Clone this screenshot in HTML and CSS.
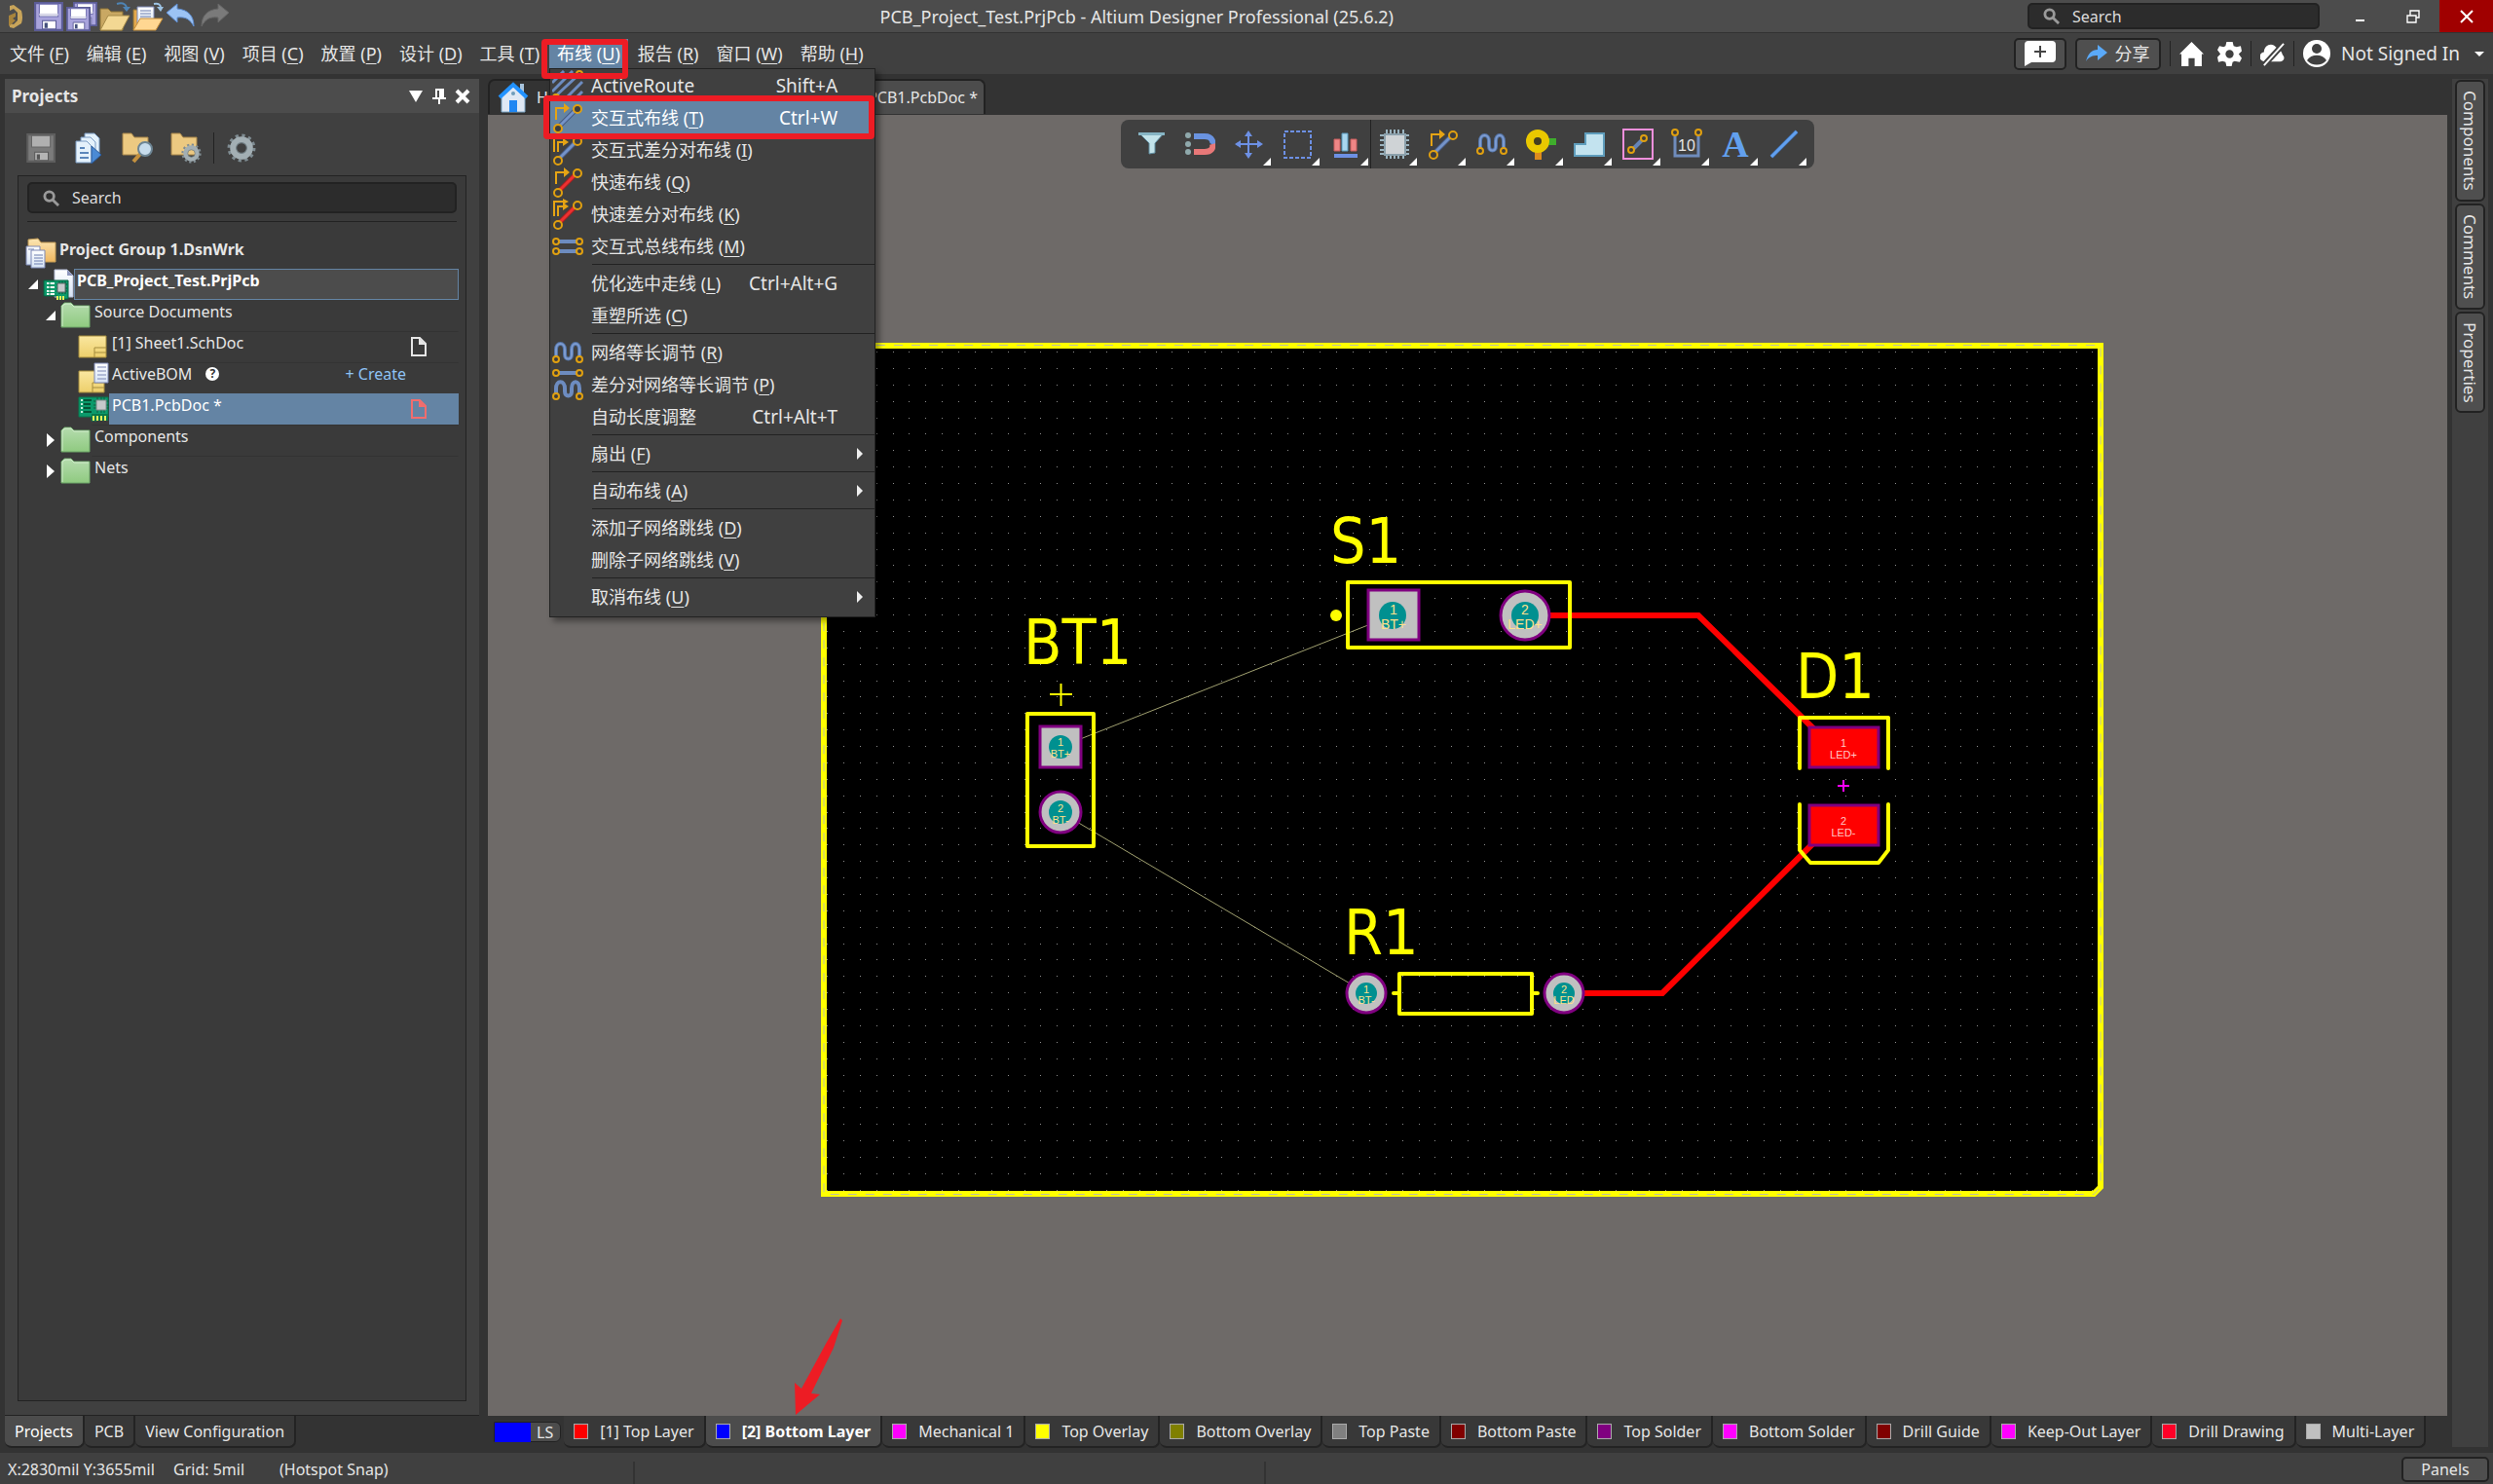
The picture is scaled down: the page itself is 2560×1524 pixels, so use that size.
FILE: index.html
```html
<!DOCTYPE html>
<html lang="zh-CN">
<head>
<meta charset="utf-8">
<title>PCB_Project_Test.PrjPcb - Altium Designer Professional (25.6.2)</title>
<link rel="stylesheet" href="styles.css">
</head>
<body>
<svg class="defs" aria-hidden="true">
  <defs>
    <linearGradient id="paper" x2="0" y2="1"><stop offset="0" stop-color="#fff"/><stop offset="1" stop-color="#d5e2f4"/></linearGradient>
    <linearGradient id="gold" x2="0" y2="1"><stop offset="0" stop-color="#fbe6b4"/><stop offset="1" stop-color="#efb75f"/></linearGradient>
    <linearGradient id="leaf" x2="0" y2="1"><stop offset="0" stop-color="#b5dcae"/><stop offset="1" stop-color="#8fca80"/></linearGradient>
    <linearGradient id="sheet" x2="0" y2="1"><stop offset="0" stop-color="#fae7a0"/><stop offset="1" stop-color="#edcf6b"/></linearGradient>
  </defs>
  <symbol id="i-magnifier" viewBox="0 0 18 18"><circle cx="7" cy="7" r="5" fill="none" stroke="#9a9a9a" stroke-width="3"/><path d="M11 11l6 6" stroke="#9a9a9a" stroke-width="3"/></symbol>
  <symbol id="i-floppy" viewBox="0 0 28 28"><path d="M1 1h26v26H1z" fill="#a9a4dc" stroke="#5b5c96" stroke-width="2"/><path d="M5 2h18v12H5z" fill="#fff" stroke="#6d6cae"/><path d="M5 11h18v2H5z" fill="#d8d8e8"/><path d="M8 18h13v8H8z" fill="#fff" stroke="#5b5c96"/><path d="M10 20h3v5h-3z" fill="#44507c"/></symbol>
  <symbol id="i-floppy-off" viewBox="0 0 28 28"><path d="M1 1h26v26H1z" fill="#7b7b7b" stroke="#5e5e5e" stroke-width="2"/><path d="M5 2h18v11H5z" fill="#b0b0b0" stroke="#666"/><path d="M8 18h13v8H8z" fill="#b5b5b5" stroke="#5a5a5a"/><path d="M10 20h3v5h-3z" fill="#555"/></symbol>
  <symbol id="i-folder-green" viewBox="0 0 32 28"><path d="M1 26V4l3-3h7l3 3h16v22z" fill="url(#leaf)" stroke="#6da768"/><path d="M2 25V4l3-2h6l3 3h15" fill="none" stroke="#d3ecce"/></symbol>
  <symbol id="i-sheet" viewBox="0 0 32 24"><path d="M1 1h28v22H1z" fill="url(#sheet)" stroke="#a58c3d"/><path d="M17 23V13h12M17 18h12" fill="none" stroke="#a58c3d"/></symbol>
  <symbol id="i-bom" viewBox="0 0 32 32"><path d="M1 9h26v22H1z" fill="url(#sheet)" stroke="#a58c3d"/><path d="M15 31V21h12M15 26h12" fill="none" stroke="#a58c3d"/><path d="M17 1h14v20H17z" fill="url(#paper)" stroke="#7d88b5"/><path d="M20 5h9M20 9h9M20 13h9M20 17h9" stroke="#7d88b5"/></symbol>
  <symbol id="i-board" viewBox="0 0 32 26"><path d="M1 1h30v20H20v4h-6v-4H1z" fill="#0b9a6b" stroke="#077a50"/><path d="M14 18h17v7H14z" fill="#08784a"/><path d="M16 20v5M20 20v5M24 20v5M28 20v5" stroke="#e3f25c" stroke-width="2"/><path d="M6 4h8M6 8h7M6 12h7M6 16h8" stroke="#055436" stroke-width="2"/><path d="M3 4h2M3 8h2M3 12h2M3 16h2" stroke="#c8f0dc" stroke-width="2"/><path d="M16 5h16M16 9h16M16 12h16M20 1v16M24 1v16M27 1v16" stroke="#0f5d41"/><path d="M19 4h10v10H19z" fill="#c5c9cb" stroke="#7f8a8a"/></symbol>
  <symbol id="i-project" viewBox="0 0 32 32"><path d="M12 1h13l6 6v22H12z" fill="url(#paper)" stroke="#b7bfd8"/><path d="M25 1v6h6z" fill="#8e97bd"/><path d="M1 12h25v19H15v-3H1z" fill="#0b9a6b" stroke="#06603f"/><path d="M4 15h8M4 19h8M4 23h8M4 26h8" stroke="#f0fff4" stroke-width="2"/><path d="M7 14v13" stroke="#0b7a53"/><path d="M14 16h11M14 20h11M14 23h11M17 13v13M20 13v13M23 13v13" stroke="#0d4f38"/><path d="M15 15h8v9h-8z" fill="#c5c9cb" stroke="#5b6b66"/><path d="M15 28v4M18 28v4M21 28v4" stroke="#e3f25c" stroke-width="2"/></symbol>
  <symbol id="i-group" viewBox="0 0 32 32"><path d="M3 20V2l10-1 3 4h15v20H3z" fill="url(#gold)" stroke="#c29b54"/><path d="M1 9h14v19H1z" fill="url(#paper)" stroke="#7d88b5"/><path d="M6 13h14v18H6z" fill="url(#paper)" stroke="#7d88b5"/><path d="M9 18h9M9 21h9M9 24h9M9 27h9M3 12h6" stroke="#6d7fb0"/></symbol>
  <symbol id="i-page" viewBox="0 0 16 20"><path d="M1 1h8l6 6v12H1z" fill="none" stroke="currentColor" stroke-width="2"/><path d="M8 1v7h7z" fill="currentColor"/></symbol>
  <symbol id="i-route" viewBox="0 0 32 32"><path d="M6 26L26 6" stroke="#46597f" stroke-width="5"/><path d="M6 26L26 6" stroke="#7493c8" stroke-width="3"/><path d="M4 18V6h9" fill="none" stroke="#e6a414" stroke-width="2"/><path d="M12 1l6 5-6 5z" fill="#e6a414"/><g fill="#3d3d3d" stroke="#e0a010" stroke-width="2"><circle cx="26" cy="7" r="4"/><circle cx="6" cy="27" r="4"/></g></symbol>
  <symbol id="i-route-diff" viewBox="0 0 32 32"><path d="M6 26L26 6" stroke="#46597f" stroke-width="5"/><path d="M6 26L26 6" stroke="#7493c8" stroke-width="3"/><path d="M2 18V3h9M6 18V8h6" fill="none" stroke="#e6a414" stroke-width="2"/><path d="M11 0l6 3-6 3zM11 4l6 4-6 4z" fill="#e6a414"/><g fill="#3d3d3d" stroke="#e0a010" stroke-width="2"><circle cx="26" cy="7" r="4"/><circle cx="6" cy="27" r="4"/></g></symbol>
  <symbol id="i-quick" viewBox="0 0 32 32"><path d="M6 26L26 6" stroke="#a02020" stroke-width="5"/><path d="M6 26L26 6" stroke="#ee3030" stroke-width="3"/><path d="M4 18V6h9" fill="none" stroke="#e6a414" stroke-width="2"/><path d="M12 1l6 5-6 5z" fill="#e6a414"/><g fill="#3d3d3d" stroke="#e0a010" stroke-width="2"><circle cx="26" cy="7" r="4"/><circle cx="6" cy="27" r="4"/></g></symbol>
  <symbol id="i-quick-diff" viewBox="0 0 32 32"><path d="M6 26L26 6" stroke="#a02020" stroke-width="5"/><path d="M6 26L26 6" stroke="#ee3030" stroke-width="3"/><path d="M2 18V3h9M6 18V8h6" fill="none" stroke="#e6a414" stroke-width="2"/><path d="M11 0l6 3-6 3zM11 4l6 4-6 4z" fill="#e6a414"/><g fill="#3d3d3d" stroke="#e0a010" stroke-width="2"><circle cx="26" cy="7" r="4"/><circle cx="6" cy="27" r="4"/></g></symbol>
  <symbol id="i-active" viewBox="0 0 32 32"><path d="M0 13L12 1M0 22L21 1M1 29L28 4M14 29L31 12M24 29l7-7" stroke="#6d8cc0" stroke-width="3"/><g fill="#3d3d3d" stroke="#e0a010" stroke-width="2"><circle cx="28" cy="4" r="3"/><circle cx="4" cy="28" r="3"/></g></symbol>
  <symbol id="i-bus" viewBox="0 0 32 32"><path d="M4 11h24M4 21h24" stroke="#6d8cc0" stroke-width="4"/><g fill="#3d3d3d" stroke="#e0a010" stroke-width="2"><circle cx="4" cy="11" r="3"/><circle cx="28" cy="11" r="3"/><circle cx="4" cy="21" r="3"/><circle cx="28" cy="21" r="3"/></g></symbol>
  <symbol id="i-tune" viewBox="0 0 32 32"><path d="M4 22V13c0-8 9-8 9 0v5c0 6 7 6 7 0v-5c0-8 8-8 8 0v9" fill="none" stroke="#5475a8" stroke-width="4"/><path d="M4 22V13c0-8 9-8 9 0v5c0 6 7 6 7 0v-5c0-8 8-8 8 0v9" fill="none" stroke="#7d9bd0" stroke-width="2"/><g fill="#3d3d3d" stroke="#e0a010" stroke-width="2"><circle cx="4" cy="23" r="3"/><circle cx="28" cy="23" r="3"/></g></symbol>
  <symbol id="i-tune-diff" viewBox="0 0 32 32"><path d="M4 4h24" stroke="#6d8cc0" stroke-width="4"/><path d="M4 27V20c0-9 9-9 9 0v3c0 6 7 6 7 0v-3c0-9 8-9 8 0v7" fill="none" stroke="#6d8cc0" stroke-width="4"/><g fill="#3d3d3d" stroke="#e0a010" stroke-width="2"><circle cx="4" cy="4" r="3"/><circle cx="28" cy="4" r="3"/><circle cx="4" cy="28" r="3"/><circle cx="28" cy="28" r="3"/></g></symbol>
  <symbol id="i-gear" viewBox="0 0 28 28"><circle cx="14" cy="14" r="12" fill="none" stroke="#7f8c92" stroke-width="3" stroke-dasharray="3 3.28"/><circle cx="14" cy="14" r="8" fill="none" stroke="#a3afb4" stroke-width="6"/><circle cx="14" cy="14" r="5" fill="none" stroke="#6f7c82"/></symbol>
</svg>

<div class="app">
  <header class="titlebar">
    <div class="quick">
      <svg class="logo" viewBox="0 0 16 26"><path d="M2 2l4-1 8 6q2 7 0 13l-8 5-4-1v-4l4 1 4-4V9L6 5 2 7z" fill="#c9a55a"/><path d="M1 12l7-3v4l-3 2 3 2-7 6z" fill="#a8843c"/></svg>
      <button aria-label="Save"><svg viewBox="0 0 28 28"><use href="#i-floppy"/></svg></button>
      <button aria-label="Save all"><svg viewBox="0 0 32 30"><use href="#i-floppy" x="7" y="0" width="25" height="25"/><use href="#i-floppy" x="0" y="5" width="25" height="25"/></svg></button>
      <button aria-label="Open"><svg viewBox="0 0 32 30"><path d="M1 29V7h8l3 3h12v19z" fill="#c9a863" stroke="#8f7536"/><path d="M1 29l8-15h22l-8 15z" fill="#f3d893" stroke="#a58a48"/><path d="M18 2c7-2 10 1 10 5" fill="none" stroke="#4e84b4" stroke-width="2"/><path d="M24 5h8l-4 5z" fill="#4e84b4"/></svg></button>
      <button aria-label="Open project"><svg viewBox="0 0 32 30"><path d="M1 29V8h6v18z" fill="#e5a94c" stroke="#8f7536"/><path d="M5 5h17v20H5z" fill="url(#paper)" stroke="#7d88b5"/><path d="M8 9h11M8 12h11M8 15h11" stroke="#6d7fb0"/><path d="M1 29l7-12h23l-7 12z" fill="#ffd792" stroke="#c48c38"/><path d="M22 2c5-1 7 1 7 4" fill="none" stroke="#9cc3e4" stroke-width="2"/><path d="M25 5h7l-3 5z" fill="#9cc3e4"/></svg></button>
      <button aria-label="Undo"><svg viewBox="0 0 32 30"><path d="M1 11L12 2v5c12 1 17 8 17 18-4-7-8-10-17-9v5z" fill="#9cc3f4" stroke="#5d8cd0"/></svg></button>
      <button aria-label="Redo"><svg viewBox="0 0 32 30"><path d="M31 11L20 2v5C8 8 3 15 3 25c4-7 8-10 17-9v5z" fill="#7a7a7a" stroke="#666"/></svg></button>
    </div>
    <h1>PCB_Project_Test.PrjPcb - Altium Designer Professional (25.6.2)</h1>
    <label class="field title-search"><svg><use href="#i-magnifier"/></svg><input type="text" placeholder="Search" aria-label="Search"></label>
    <div class="window-buttons">
      <button aria-label="Minimize"><svg viewBox="0 0 14 14"><path d="M3 11h9" stroke="#fff" stroke-width="2"/></svg></button>
      <button aria-label="Restore"><svg viewBox="0 0 14 14"><path d="M1 6h9v7H1zM4 6V1h9v7h-3" fill="none" stroke="#fff" stroke-width="1.4"/></svg></button>
      <button class="close" aria-label="Close"><svg viewBox="0 0 14 14"><path d="M1 1l12 12M13 1L1 13" stroke="#fff" stroke-width="2"/></svg></button>
    </div>
  </header>

  <nav class="menubar">
    <ul class="menus">
      <li><button>文件 (<u>F</u>)</button></li>
      <li><button>编辑 (<u>E</u>)</button></li>
      <li><button>视图 (<u>V</u>)</button></li>
      <li><button>项目 (<u>C</u>)</button></li>
      <li><button>放置 (<u>P</u>)</button></li>
      <li><button>设计 (<u>D</u>)</button></li>
      <li><button>工具 (<u>T</u>)</button></li>
      <li class="open"><button>布线 (<u>U</u>)</button>
        <ul class="popup">
          <li><button><svg><use href="#i-active"/></svg><span class="latin">ActiveRoute</span><kbd>Shift+A</kbd></button></li>
          <li><button class="current"><svg><use href="#i-route"/></svg><span>交互式布线 (<u>T</u>)</span><kbd>Ctrl+W</kbd></button></li>
          <li><button><svg><use href="#i-route-diff"/></svg><span>交互式差分对布线 (<u>I</u>)</span></button></li>
          <li><button><svg><use href="#i-quick"/></svg><span>快速布线 (<u>Q</u>)</span></button></li>
          <li><button><svg><use href="#i-quick-diff"/></svg><span>快速差分对布线 (<u>K</u>)</span></button></li>
          <li><button><svg><use href="#i-bus"/></svg><span>交互式总线布线 (<u>M</u>)</span></button></li>
          <li class="group"><button><svg></svg><span>优化选中走线 (<u>L</u>)</span><kbd>Ctrl+Alt+G</kbd></button></li>
          <li><button><svg></svg><span>重塑所选 (<u>C</u>)</span></button></li>
          <li class="group"><button><svg><use href="#i-tune"/></svg><span>网络等长调节 (<u>R</u>)</span></button></li>
          <li><button><svg><use href="#i-tune-diff"/></svg><span>差分对网络等长调节 (<u>P</u>)</span></button></li>
          <li><button><svg></svg><span>自动长度调整</span><kbd>Ctrl+Alt+T</kbd></button></li>
          <li class="group"><button class="sub"><svg></svg><span>扇出 (<u>F</u>)</span></button></li>
          <li class="group"><button class="sub"><svg></svg><span>自动布线 (<u>A</u>)</span></button></li>
          <li class="group"><button><svg></svg><span>添加子网络跳线 (<u>D</u>)</span></button></li>
          <li><button><svg></svg><span>删除子网络跳线 (<u>V</u>)</span></button></li>
          <li class="group"><button class="sub"><svg></svg><span>取消布线 (<u>U</u>)</span></button></li>
        </ul>
        <span class="mark mark-menu"></span>
        <span class="mark mark-item"></span>
      </li>
      <li><button>报告 (<u>R</u>)</button></li>
      <li><button>窗口 (<u>W</u>)</button></li>
      <li><button>帮助 (<u>H</u>)</button></li>
    </ul>
    <div class="account">
      <button class="raised comment" aria-label="Add comment"><svg viewBox="0 0 32 26"><path d="M4 0h24q4 0 4 4v14q0 4-4 4H7l-7 4V4q0-4 4-4z" fill="#fff"/><path d="M16 5v12M10 11h12" stroke="#444" stroke-width="2"/></svg></button>
      <button class="raised share"><svg viewBox="0 0 22 18"><path d="M0 17C2 9 6 5 12 5V0l10 8-10 8v-5c-5 0-9 1-12 6z" fill="#5aa9f8"/></svg>分享</button>
      <span class="bar"></span>
      <button aria-label="Home"><svg viewBox="0 0 24 24"><path d="M12 0L0 12h2v12h7v-8h6v8h7V12h2z" fill="#fff"/></svg></button>
      <button class="settings" aria-label="Settings"><svg viewBox="0 0 24 24"><path d="M9 0h6l1 4 3 1 4-1 1 5-3 3 3 4-2 4-5-1-2 1-1 4H9l-1-4-3-1-4 1-1-5 3-3-3-4 2-4 4 1 2-1z" fill="#fff"/><circle cx="12" cy="12" r="4" fill="#404040"/></svg></button>
      <span class="bar"></span>
      <button aria-label="Offline"><svg viewBox="0 0 26 24"><path d="M5 20a5 5 0 0 1-1-10c0-8 9-11 13-5 4-1 7 8 7 8 3 3 1 7-3 7z" fill="#fff"/><path d="M3 25L25 1" stroke="#404040" stroke-width="6"/><path d="M4 24L25 1" stroke="#fff" stroke-width="2"/></svg></button>
      <span class="bar"></span>
      <button class="user"><svg viewBox="0 0 28 28"><circle cx="14" cy="14" r="14" fill="#fff"/><circle cx="14" cy="9" r="5" fill="#404040"/><path d="M4 21c4-7 16-7 20 0-5 6-15 6-20 0z" fill="#404040"/></svg>Not Signed In<i class="caret"></i></button>
    </div>
  </nav>

  <div class="workspace">
    <aside class="left">
      <section class="panel">
        <header><h2>Projects</h2>
          <button aria-label="Panel menu"><svg viewBox="0 0 16 16"><path d="M1 2h14L8 14z" fill="#fff"/></svg></button>
          <button aria-label="Pin"><svg viewBox="0 0 16 16"><path d="M4 0h9v9h2v2H9v5H7v-5H1V9h3zM6 2v7h2V2z" fill="#fff" fill-rule="evenodd"/></svg></button>
          <button aria-label="Close panel"><svg viewBox="0 0 16 16"><path d="M2 2l12 12M14 2L2 14" stroke="#fff" stroke-width="4"/></svg></button>
        </header>
        <div class="panel-tools">
          <button aria-label="Save"><svg viewBox="-2 -1 30 30"><use href="#i-floppy-off" width="28" height="28"/></svg></button>
          <button aria-label="Compile"><svg viewBox="0 0 32 32"><g fill="#e4f1fb" stroke="#7b9cc4"><path d="M12 1h10l5 5v16H12z"/><path d="M8 5h10l5 5v16H8z"/><path d="M3 9h11l5 5v17H3z"/></g><path d="M7 16h5M7 21h9M7 26h9" stroke="#5b87bb" stroke-width="2"/><path d="M19 14l10 9-10 9z" fill="#4b8ad4" stroke="#28599a"/></svg></button>
          <button aria-label="Explore"><svg viewBox="0 0 32 32"><path d="M1 23V1h9l3 4h14v18z" fill="#ecc981" stroke="#a8864a"/><path d="M19 22l-7 8" stroke="#c4913f" stroke-width="4"/><circle cx="24" cy="17" r="7" fill="#c7dcec" stroke="#6d8594" stroke-width="2"/></svg></button>
          <button aria-label="Project options"><svg viewBox="0 0 32 32"><path d="M1 23V1h9l3 4h14v18z" fill="#ecc981" stroke="#a8864a"/><use href="#i-gear" x="11" y="11" width="21" height="21"/></svg></button>
          <span class="bar"></span>
          <button aria-label="Preferences"><svg viewBox="0 0 32 32"><use href="#i-gear" x="1" y="1" width="30" height="30"/></svg></button>
        </div>
        <div class="tree-box">
          <label class="field"><svg><use href="#i-magnifier"/></svg><input type="text" placeholder="Search" aria-label="Search projects"></label>
          <hr>
          <ul class="tree">
            <li class="l0"><svg><use href="#i-group"/></svg><span><b>Project Group 1.DsnWrk</b></span></li>
            <li class="l1 focus"><i class="down"></i><svg><use href="#i-project"/></svg><span><b>PCB_Project_Test.PrjPcb</b></span></li>
            <li class="l2"><i class="down"></i><svg><use href="#i-folder-green"/></svg><span>Source Documents</span></li>
            <li class="l3"><svg><use href="#i-sheet"/></svg><span class="lined">[1] Sheet1.SchDoc<svg class="state"><use href="#i-page"/></svg></span></li>
            <li class="l3"><svg><use href="#i-bom"/></svg><span class="lined">ActiveBOM<em>?</em><a href="#create">+ Create</a></span></li>
            <li class="l3 picked"><svg><use href="#i-board"/></svg><span>PCB1.PcbDoc *<svg class="state dirty"><use href="#i-page"/></svg></span></li>
            <li class="l2"><i class="right-arrow"></i><svg><use href="#i-folder-green"/></svg><span class="lined">Components</span></li>
            <li class="l2"><i class="right-arrow"></i><svg><use href="#i-folder-green"/></svg><span class="lined">Nets</span></li>
          </ul>
        </div>
      </section>
      <div class="tabs">
        <button class="active">Projects</button><button>PCB</button><button>View Configuration</button>
      </div>
    </aside>

    <main>
      <div class="doc-tabs">
        <button class="home"><svg viewBox="0 0 32 32"><path d="M23 2h4v10h-4z" fill="#a9c4dc"/><path d="M4 14L16 3l12 11v17H4z" fill="#dfe8f4" stroke="#7ba4c4"/><path d="M12 19h8v12h-8z" fill="#1f86f2"/><circle cx="16" cy="12" r="2" fill="#6f9cba"/><path d="M2 16L16 3l14 13" fill="none" stroke="#2292ff" stroke-width="4"/></svg>H</button>
        <button class="doc active">PCB1.PcbDoc *</button>
      </div>
      <div class="canvas">
        <svg class="board" viewBox="501 118 2012 1336" role="img" aria-label="PCB layout">
          <defs><pattern id="grid" x="917" y="429" width="135" height="135" patternUnits="userSpaceOnUse"><path d="M0 .5h135M0 16.5h135M0 33.5h135M0 50.5h135M0 67.5h135M0 84.5h135M0 101.5h135M0 118.5h135" stroke="#8c8c8c" stroke-dasharray="1 15 1 16 1 16 1 16 1 16 1 16 1 16 1 16"/></pattern></defs>
          <path d="M846 355H2157V1219L2150 1226H846z" fill="#000"/>
          <path d="M849 358H2154V1223H849z" fill="url(#grid)"/>
          <path d="M846 355H2157V1219L2150 1226H846z" fill="none" stroke="#ff0" stroke-width="6"/>
          <path d="M846 354.5H2157V1219L2150 1226.500H846z" fill="none" stroke="#c0c0a0" stroke-dasharray="9 9"/>
          <g stroke="#a0a070"><path d="M1089 767L1430 632M1089 834L1403 1020"/></g>
          <g fill="none" stroke="#f00" stroke-width="6"><path d="M1566 632H1744L1866 752"/><path d="M1606 1020H1707L1866 862"/></g>
          <g class="silk">
            <path d="M1384 598H1612V665H1384z"/><path d="M1055 733H1123V869H1055z"/>
            <path d="M1437 1000H1573V1041H1437zM1431 1020h6M1573 1020h6"/>
          </g>
          <circle cx="1372" cy="632" r="6" fill="#ff0"/>
          <path d="M1078 713h23M1089.500 702v23" stroke="#ff0" stroke-width="2"/>
          <g fill="#c0c0c0" stroke="#800080" stroke-width="3">
            <path d="M1405 606h52v51h-52zM1068 746h42v42h-42z"/>
            <circle cx="1566" cy="632" r="25"/><circle cx="1089" cy="834" r="21"/><circle cx="1403" cy="1020" r="20"/><circle cx="1606" cy="1020" r="20"/>
            <path d="M1858 747h71v41h-71zM1858 827h71v41h-71z" fill="#f00"/>
          </g>
          <g class="silk"><path d="M1848 789V737H1939V789M1848 826V873L1859 886H1929L1939 873V826"/></g>
          <g fill="#009090"><circle cx="1430" cy="632" r="14"/><circle cx="1566" cy="632" r="14"/><circle cx="1089" cy="767" r="12"/><circle cx="1089" cy="834" r="12"/><circle cx="1403" cy="1020" r="11"/><circle cx="1606" cy="1020" r="11"/></g>
          <path d="M1887 807h12M1893 801v12" stroke="#f0f" stroke-width="2"/>
          <g class="designator"><text x="1366" y="578">S1</text><text x="1051" y="682">BT1</text><text x="1844" y="717">D1</text><text x="1380" y="980">R1</text></g>
          <g class="pin">
            <text class="big" x="1431" y="631">1</text><text class="big" x="1431" y="646">BT+</text>
            <text class="big" x="1566" y="631">2</text><text class="big" x="1566" y="646">LED+</text>
            <text x="1089" y="766">1</text><text x="1089" y="778">BT+</text>
            <text x="1089" y="834">2</text><text x="1089" y="846">BT-</text>
            <text x="1403" y="1020">1</text><text x="1403" y="1031">BT-</text>
            <text x="1606" y="1020">2</text><text x="1606" y="1031">LED</text>
            <g class="smd"><text x="1893" y="767">1</text><text x="1893" y="779">LED+</text><text x="1893" y="847">2</text><text x="1893" y="859">LED-</text></g>
          </g>
          <path d="M817 1453L816 1420L823 1426L848 1380L863 1354L865 1356L856 1384L833 1431L842 1432z" fill="#ed1c24"/>
        </svg>
        <div class="toolbar">
          <button aria-label="Filter"><svg viewBox="0 0 32 32"><path d="M4 5h25L20 15v10l-6 1V15z" fill="#c3e3ea" stroke="#5f8da0"/><path d="M3 4h27v3H3z" fill="#86b4c4"/></svg></button>
          <button aria-label="Snap"><svg viewBox="0 0 32 32"><g fill="#8fa9ac"><circle cx="4" cy="7" r="3"/><circle cx="4" cy="16" r="3"/><circle cx="4" cy="24" r="3"/></g><path d="M10 8h11c9 0 9 8 8 9" fill="none" stroke="#6a93e0" stroke-width="6"/><path d="M10 24h11c7 0 9-4 8-8" fill="none" stroke="#e87878" stroke-width="6"/></svg></button>
          <button class="more" aria-label="Move"><svg viewBox="0 0 32 32"><path d="M16 5v23M5 16h23" stroke="#6d90e4" stroke-width="2"/><path d="M16 2l4 6h-8zM16 31l4-6h-8zM2 16l6-4v8zM31 16l-6-4v8z" fill="#6d90e4"/></svg></button>
          <button class="more" aria-label="Select"><svg viewBox="0 0 32 32"><path d="M3 3h27v27H3z" fill="none" stroke="#6d90e4" stroke-width="2" stroke-dasharray="4 2"/></svg></button>
          <button class="more" aria-label="Align"><svg viewBox="0 0 32 32"><path d="M4 11h6v12H4zM21 11h6v12h-6z" fill="#ee8686" stroke="#c95f5f"/><path d="M12 5h6v18h-6z" fill="#a9d6ee" stroke="#5d9cc0"/><path d="M4 26h24v4H4z" fill="#6d90e4"/></svg></button>
          <button class="more split" aria-label="Component"><svg viewBox="0 0 32 32"><path d="M1 7h30M1 12h30M1 17h30M1 22h30M1 26h30M8 1v30M12 1v30M16 1v30M20 1v30M25 1v30" stroke="#9bb4c0" stroke-width="2"/><path d="M6 6h21v21H6z" fill="#cfd3d6" stroke="#8ba0ab" stroke-width="2"/></svg></button>
          <button class="more" aria-label="Route"><svg><use href="#i-route"/></svg></button>
          <button class="more" aria-label="Tune"><svg><use href="#i-tune"/></svg></button>
          <button class="more" aria-label="Via"><svg viewBox="0 0 32 32"><path d="M20 10h12v7H20z" fill="#3fae2c"/><path d="M10 20h7v12h-7z" fill="#de8b1d"/><circle cx="13" cy="13" r="8" fill="#433d20" stroke="#eac800" stroke-width="8"/></svg></button>
          <button class="more" aria-label="Polygon"><svg viewBox="0 0 32 32"><path d="M1 28V16h11V5h19v23z" fill="#c3e3ef" stroke="#5f9dbc" stroke-width="2"/></svg></button>
          <button class="more" aria-label="Room"><svg viewBox="0 0 32 32"><path d="M1 1h30v30H1z" fill="none" stroke="#f08fdc" stroke-width="2"/><path d="M10 22L22 10" stroke="#6484b8" stroke-width="4"/><g fill="#3d3d3d" stroke="#e0a010" stroke-width="2"><circle cx="22" cy="10" r="3"/><circle cx="9" cy="22" r="3"/></g></svg></button>
          <button class="more" aria-label="Dimension"><svg viewBox="0 0 32 32"><path d="M4 8v20h24V8" fill="none" stroke="#6f8cbc" stroke-width="3"/><g fill="#3d3d3d" stroke="#e0a010" stroke-width="2"><circle cx="4" cy="4" r="3"/><circle cx="28" cy="4" r="3"/></g><text class="dim" x="16" y="23">10</text></svg></button>
          <button class="more text" aria-label="Text">A</button>
          <button class="more" aria-label="Line"><svg viewBox="0 0 32 32"><path d="M3 29L29 3" stroke="#3d6fb4" stroke-width="4"/><path d="M3 29L29 3" stroke="#62a0ee" stroke-width="3"/></svg></button>
        </div>
      </div>
      <div class="tabs layers">
        <button class="ls"><i></i>LS</button>
        <button><i class="c-red"></i>[1] Top Layer</button>
        <button class="active"><i class="c-blue"></i>[2] Bottom Layer</button>
        <button><i class="c-magenta"></i>Mechanical 1</button>
        <button><i class="c-yellow"></i>Top Overlay</button>
        <button><i class="c-olive"></i>Bottom Overlay</button>
        <button><i class="c-gray"></i>Top Paste</button>
        <button><i class="c-maroon"></i>Bottom Paste</button>
        <button><i class="c-purple"></i>Top Solder</button>
        <button><i class="c-magenta"></i>Bottom Solder</button>
        <button><i class="c-maroon"></i>Drill Guide</button>
        <button><i class="c-magenta"></i>Keep-Out Layer</button>
        <button><i class="c-crimson"></i>Drill Drawing</button>
        <button><i class="c-silver"></i>Multi-Layer</button>
      </div>
    </main>

    <aside class="right"><button>Components</button><button>Comments</button><button>Properties</button></aside>
  </div>

  <footer class="status">
    <span class="coords">X:2830mil Y:3655mil</span><span class="snap">Grid: 5mil</span><span class="message">(Hotspot Snap)</span><span class="cell"></span>
    <button class="raised">Panels</button>
  </footer>
</div>
</body>
</html>
```

FILE: styles.css
```css
* { box-sizing: border-box; }
body { margin: 0; background: #333; color: #e6e6e6; font: 16px/24px "Noto Sans", "Noto Sans CJK SC", sans-serif; }
button { margin: 0; padding: 0; border: 0; background: none; color: inherit; font: inherit; white-space: nowrap; }
button svg { display: block; }
ul { margin: 0; padding: 0; list-style: none; }
u { text-underline-offset: 3px; text-decoration-thickness: 1px; }
h1, h2 { margin: 0; font-size: 16px; }
.defs { position: absolute; width: 0; height: 0; }
.app { display: flex; flex-direction: column; height: 100vh; }

/* Title bar */
.titlebar { display: flex; align-items: center; height: 34px; background: #4c4c4c; border-bottom: 1px solid #333; }
.quick { display: flex; flex: 1; align-items: center; gap: 2px; padding-left: 8px; }
.quick button svg { width: 32px; height: 30px; }
.logo { width: 16px; height: 26px; margin-right: 8px; }
.titlebar h1 { margin-right: 651px; font-weight: 400; font-size: 18px; }
.title-search { width: 300px; height: 27px; margin-right: 13px; }
.field { display: flex; align-items: center; gap: 13px; padding-left: 14px; background: #2c2c2c; border: 2px solid #222; border-radius: 5px; }
.field svg { width: 17px; height: 17px; flex: none; }
.field input { flex: 1; min-width: 0; padding: 0; border: 0; outline: 0; background: none; color: #e6e6e6; font: inherit; }
.field input::placeholder { color: #dcdcdc; opacity: 1; }
.window-buttons { display: flex; }
.window-buttons button { display: grid; place-items: center; width: 55px; height: 33px; }
.window-buttons svg { width: 14px; height: 14px; }
.window-buttons .close { background: #a00000; }

/* Menu bar */
.menubar { display: flex; justify-content: space-between; height: 42px; padding-top: 6px; background: #404040; font-size: 18px; }
.menus { display: flex; gap: 2px; padding-left: 2px; }
.menus > li { position: relative; }
.menus > li > button { height: 30px; padding: 0 8px; line-height: 30px; }
.menus > .open > button { background: #6484a4; color: #fff; }
.popup { position: absolute; z-index: 3; top: 30px; left: 0; width: 335px; padding: 0 0 4px; background: #404040; border: 1px solid #222; box-shadow: 4px 4px 6px #0006; }
.popup button { display: flex; align-items: center; width: 100%; height: 33px; padding: 0 38px 0 2px; text-align: left; }
.popup svg { width: 32px; height: 32px; margin-right: 8px; flex: none; }
.popup span { flex: 1; }
.popup kbd { font: inherit; }
.popup kbd, .popup .latin { font-size: 19px; }
.popup .current { background: #6484a4; color: #fff; }
.popup .group::before { content: ""; display: block; height: 1px; margin: 2px 0 2px 43px; background: #222; }
.popup .sub { padding-right: 12px; }
.popup .sub::after { content: ""; border: 6px solid transparent; border-left-color: #eee; border-right: 0; }
.mark { position: absolute; z-index: 4; border: 6px solid #ed1c24; border-radius: 4px; }
.mark-menu { inset: 0 0 -5px -8px; }
.mark-item { top: 58px; left: -6px; width: 340px; height: 45px; }
.account { display: flex; align-items: center; gap: 9px; height: 30px; padding-right: 9px; }
.raised { display: flex; align-items: center; justify-content: center; height: 33px; background: #4f4f4f; border: 2px solid #222; border-radius: 5px; }
.comment { width: 54px; }
.comment svg { width: 32px; height: 26px; }
.share { width: 88px; gap: 7px; }
.share svg { width: 22px; height: 18px; }
.account > button:not(.raised) svg { width: 25px; height: 25px; }
.settings { margin-left: 5px; }
.bar { width: 1px; height: 26px; background: #222; }
.user { display: flex; align-items: center; gap: 11px; font-size: 19px; }
.account > .user:not(.raised) svg { width: 28px; height: 28px; }
.caret { border: 5px solid transparent; border-top-color: #fff; border-bottom: 0; margin-left: 4px; }

/* Workspace columns */
.workspace { display: flex; flex: 1; min-height: 0; padding: 5px 5px 0; }
.left { display: flex; flex-direction: column; width: 487px; margin-right: 9px; }
.panel { display: flex; flex: 1; flex-direction: column; background: #404040; border-bottom: 1px solid #222; }
.panel > header { display: flex; align-items: center; gap: 8px; height: 35px; padding: 0 9px 0 7px; background: #4c4c4c; }
.panel h2 { flex: 1; font-size: 17px; }
.panel > header svg { width: 16px; height: 16px; }
.panel-tools { display: flex; align-items: center; gap: 18px; padding: 20px 20px 10px; }
.panel-tools svg { width: 32px; height: 32px; }
.panel-tools .bar { height: 32px; margin: 0 -6px; }
.tree-box { flex: 1; margin: 2px 13px 14px; padding: 6px 7px 0 9px; background: #3a3a3a; border: 1px solid #222; }
.tree-box .field { height: 32px; margin-right: 2px; }
.tree-box hr { height: 1px; margin: 8px 2px 16px 0; border: 0; background: #222; }
.tree { margin-left: -2px; }
.tree li { display: flex; height: 32px; }
.tree li > svg { width: 32px; height: 32px; flex: none; }
.tree span { display: flex; flex: 1; height: 32px; padding-left: 2px; border: 1px solid transparent; line-height: 23px; }
.tree .lined { border-top-color: #333; }
.tree .focus span { background: #4c4c4c; border-color: #6484a4; color: #fff; }
.tree .picked span { background: #6484a4; color: #fff; }
.tree .l1 { padding-left: 3px; }
.tree .l2 { padding-left: 21px; }
.tree .l3 { padding-left: 54px; }
.tree i { width: 10px; height: 10px; margin: 11px 5px 0 0; background: #fff; clip-path: polygon(100% 0, 100% 100%, 0 100%); }
.tree i.right-arrow { width: 8px; height: 14px; margin: 9px 6px 0 1px; clip-path: polygon(0 0, 100% 50%, 0 100%); }
.tree em { display: grid; place-items: center; width: 14px; height: 14px; margin: 4px 0 0 14px; border-radius: 50%; background: #fff; color: #333; font: bold 12px/14px "Noto Sans", sans-serif; }
.tree a { margin: 0 53px 0 auto; color: #8ec2f4; text-decoration: none; }
.tree .state { width: 16px; height: 20px; margin: 5px 32px 0 auto; color: #e6e6e6; }
.tree .dirty { color: #f26d6d; }

/* Bottom tab strips */
.tabs { display: flex; height: 38px; }
.tabs button { display: flex; align-items: center; height: 33px; background: #383838; border: 2px solid #232323; border-width: 0 2px 2px 0; border-radius: 0 0 7px 7px; }
.tabs .active { background: #4c4c4c; color: #fff; }
.left .tabs button { padding: 0 10px; }

/* Document area */
main { display: flex; flex: 1; flex-direction: column; min-width: 0; }
.doc-tabs { display: flex; height: 37px; }
.doc-tabs button { height: 36px; border: 1px solid #222; border-width: 2px 2px 0; border-radius: 7px 7px 0 0; }
.doc-tabs .home { display: flex; align-items: center; width: 190px; gap: 8px; padding-left: 8px; }
.doc-tabs .home svg { width: 32px; height: 32px; }
.doc-tabs .doc { width: 321px; padding-right: 6px; background: #4c4c4c; text-align: right; }
.canvas { position: relative; display: flex; flex: 1; align-items: flex-start; justify-content: center; min-height: 0; padding-top: 5px; background: #6e6a68; }
.board { position: absolute; inset: 0; width: 100%; height: 100%; }
.silk { fill: none; stroke: #ff0; stroke-width: 4; stroke-linejoin: round; stroke-linecap: round; }
.designator { fill: #ff0; font: 64px "DejaVu Sans Condensed", "DejaVu Sans Mono", monospace; }
.pin { fill: #ffe08c; font: 11px "Liberation Sans", sans-serif; text-anchor: middle; }
.pin .big { font-size: 14px; }
.smd { fill: #ffc8c8; }
.toolbar { position: relative; display: flex; height: 50px; padding: 0 6px; background: #404040; border-radius: 8px; }
.toolbar button { position: relative; display: grid; place-items: center; width: 50px; }
.toolbar svg { width: 32px; height: 32px; }
.toolbar .more::after { content: ""; position: absolute; right: 2px; bottom: 3px; width: 8px; height: 8px; background: #fff; clip-path: polygon(100% 0, 100% 100%, 0 100%); }
.toolbar .split { box-shadow: inset 1px 0 #222; }
.toolbar .text { color: #62a0ee; font: bold 38px/50px "Liberation Serif", serif; }
.dim { fill: #e6e6e6; font: 16px "Liberation Sans", sans-serif; text-anchor: middle; }
.layers { padding-left: 6px; }
.layers button { gap: 12px; padding: 0 10px; }
.layers i { width: 15px; height: 16px; border: 1px solid #aaa; }
.layers .active { font-weight: 700; }
.layers .ls { height: 21px; margin: 6px 3px 0 0; padding: 0 7px 0 0; gap: 6px; background: #4c4c4c; border: 1px solid #222; border-radius: 0 6px 6px 0; }
.layers .ls i { width: 37px; height: 20px; border: 0; background: #00f; }
.c-red { background: #f00; }
.c-blue { background: #00f; }
.c-magenta { background: #f0f; }
.c-yellow { background: #ff0; }
.c-olive { background: #808000; }
.c-gray { background: #808080; }
.c-maroon { background: #800000; }
.c-purple { background: #800080; }
.c-crimson { background: #ff0028; }
.c-silver { background: #c0c0c0; }

/* Right strip */
.right { display: flex; flex-direction: column; gap: 2px; width: 37px; margin: 0 0 6px 5px; padding: 1px 3px; background: #404040; }
.right button { writing-mode: vertical-rl; width: 31px; padding: 9px 0; background: #4f4f4f; border: 2px solid #222; border-radius: 6px; font-size: 17px; line-height: 27px; }

/* Status bar */
.status { display: flex; align-items: center; height: 32px; padding: 2px 4px 0 8px; background: #404040; }
.coords { width: 170px; }
.snap { width: 109px; }
.message { width: 363px; }
.cell { width: 650px; height: 24px; margin-top: 8px; border: 1px solid #333; border-width: 0 2px; }
.status .raised { width: 90px; height: 26px; margin-left: auto; }
```
